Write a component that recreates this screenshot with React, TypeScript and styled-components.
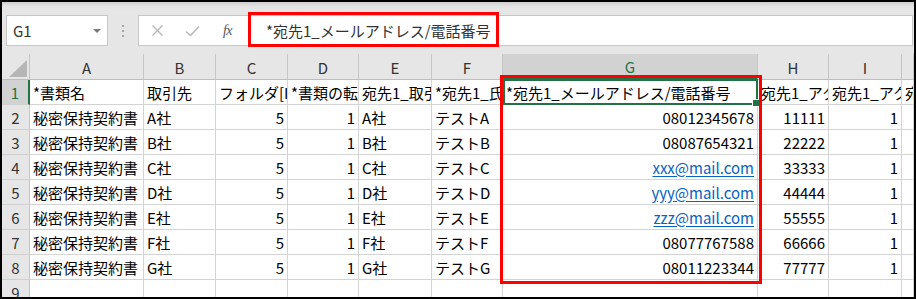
import React from 'react'
import styled, { createGlobalStyle } from 'styled-components'

const GlobalStyle = createGlobalStyle`
  html, body {
    margin: 0;
    padding: 0;
    background: #ffffff;
  }
`

const Frame = styled.div`
  position: relative;
  width: 916px;
  height: 299px;
  box-sizing: border-box;
  border: 2px solid #000;
  overflow: hidden;
  background: #e6e6e6;
  display: flex;
  flex-direction: column;
  font-family: 'Noto Sans CJK JP', 'Noto Sans', sans-serif;
`

const FormulaBar = styled.div`
  display: flex;
  align-items: flex-start;
  height: 52px;
  flex-shrink: 0;
  box-sizing: border-box;
  padding: 13px 1px 0 4px;
  background: linear-gradient(#cdcdcd 0px, #e2e2e2 4px, #e6e6e6 8px);
`

const NameBox = styled.div`
  width: 102px;
  height: 31px;
  box-sizing: border-box;
  border: 1px solid #c6c6c6;
  background: #fff;
  display: flex;
  align-items: center;
  justify-content: space-between;
  padding: 0 6px;
  font-size: 15px;
  color: #333;
`

const DropArrow = styled.span`
  width: 0;
  height: 0;
  border-left: 4px solid transparent;
  border-right: 4px solid transparent;
  border-top: 4px solid #7a7a7a;
`

const Grip = styled.div`
  width: 30px;
  height: 31px;
  display: flex;
  flex-direction: column;
  align-items: center;
  justify-content: center;
  gap: 3px;
`

const GripDot = styled.span`
  width: 2px;
  height: 2px;
  background: #a6a6a6;
`

const FormulaBox = styled.div`
  flex: 1;
  height: 31px;
  box-sizing: border-box;
  border: 1px solid #c6c6c6;
  background: #fff;
  display: flex;
  align-items: center;
  padding-left: 1px;
`

const IconButton = styled.div`
  width: 35px;
  height: 29px;
  display: flex;
  align-items: center;
  justify-content: center;
`

const FxLabel = styled.span`
  font-family: 'Liberation Serif', serif;
  font-style: italic;
  font-size: 14px;
  color: #555;
  letter-spacing: -0.5px;
`

const FormulaText = styled.span`
  padding-left: 21px;
  font-size: 15px;
  color: #333;
  white-space: nowrap;
`

const Sheet = styled.div`
  flex: 1;
  display: grid;
  grid-template-columns: 28px 114px 72px 72px 71px 73px 71px 255px 71px 73px 1fr;
  grid-template-rows: 26px;
  grid-auto-rows: 25px;
  background: #fff;
  font-size: 15px;
  color: #000;
`

const Corner = styled.div`
  background: #e6e6e6;
  border-right: 1px solid #c6c6c6;
  border-bottom: 1px solid #bdbdbd;
  display: flex;
  align-items: flex-end;
  justify-content: flex-end;
  padding: 0 2px 2px 0;
`

const ColHead = styled.div<{ $active?: boolean }>`
  background: ${(p) => (p.$active ? '#d2d2d2' : '#e6e6e6')};
  color: ${(p) => (p.$active ? '#217346' : '#333')};
  border-right: 1px solid #c6c6c6;
  border-bottom: ${(p) => (p.$active ? '2px solid #217346' : '1px solid #bdbdbd')};
  display: flex;
  align-items: center;
  justify-content: center;
  padding-top: 1px;
  box-sizing: border-box;
`

const RowHead = styled.div<{ $active?: boolean }>`
  background: ${(p) => (p.$active ? '#d2d2d2' : '#e6e6e6')};
  color: ${(p) => (p.$active ? '#217346' : '#333')};
  border-right: ${(p) => (p.$active ? '2px solid #217346' : '1px solid #c6c6c6')};
  border-bottom: 1px solid #d0d0d0;
  display: flex;
  align-items: center;
  justify-content: center;
`

const Cell = styled.div<{ $align?: 'left' | 'right' }>`
  border-right: 1px solid #d4d4d4;
  border-bottom: 1px solid #d4d4d4;
  display: flex;
  align-items: center;
  justify-content: ${(p) => (p.$align === 'right' ? 'flex-end' : 'flex-start')};
  padding: 0 3px;
  overflow: hidden;
  white-space: nowrap;
  min-width: 0;
`

const Link = styled.span`
  color: #0563c1;
  text-decoration: underline;
  text-underline-offset: 2px;
`

const Highlight = styled.div<{ $left: number; $top: number; $w: number; $h: number }>`
  position: absolute;
  left: ${(p) => p.$left}px;
  top: ${(p) => p.$top}px;
  width: ${(p) => p.$w}px;
  height: ${(p) => p.$h}px;
  box-sizing: border-box;
  border: 3px solid #ff0000;
  pointer-events: none;
`

const Selection = styled.div`
  position: absolute;
  left: 501px;
  top: 77px;
  width: 255px;
  height: 26px;
  box-sizing: border-box;
  border: 2px solid #217346;
  pointer-events: none;
`

const FillHandle = styled.span`
  position: absolute;
  right: -4px;
  bottom: -4px;
  width: 6px;
  height: 6px;
  background: #217346;
  border: 1px solid #fff;
`

const columns = ['A', 'B', 'C', 'D', 'E', 'F', 'G', 'H', 'I', 'J']

const headerRow = [
  '*書類名',
  '取引先',
  'フォルダ[ID]',
  '*書類の転送設定',
  '宛先1_取引先名',
  '*宛先1_氏名',
  '*宛先1_メールアドレス/電話番号',
  '宛先1_アクセスコード',
  '宛先1_アクセスコード有効期限',
  '宛先2_取引先名',
]

const data = [
  ['A', 'テストA', '08012345678', '11111'],
  ['B', 'テストB', '08087654321', '22222'],
  ['C', 'テストC', 'xxx@mail.com', '33333'],
  ['D', 'テストD', 'yyy@mail.com', '44444'],
  ['E', 'テストE', 'zzz@mail.com', '55555'],
  ['F', 'テストF', '08077767588', '66666'],
  ['G', 'テストG', '08011223344', '77777'],
]

const CrossIcon = () => (
  <svg width="13" height="13" viewBox="0 0 13 13">
    <path d="M1.5 1.5 L11.5 11.5 M11.5 1.5 L1.5 11.5" stroke="#b8b8b8" strokeWidth="1.4" fill="none" />
  </svg>
)

const CheckIcon = () => (
  <svg width="15" height="12" viewBox="0 0 15 12">
    <path d="M1 6.5 L5.5 10.5 L14 1.5" stroke="#b8b8b8" strokeWidth="1.6" fill="none" />
  </svg>
)

const CornerTriangle = () => (
  <svg width="18" height="17" viewBox="0 0 18 17">
    <polygon points="18,0 18,17 0,17" fill="#b6b6b6" />
  </svg>
)

const App = () => {
  return (
    <Frame>
      <GlobalStyle />
      <FormulaBar>
        <NameBox>
          <span>G1</span>
          <DropArrow />
        </NameBox>
        <Grip>
          <GripDot />
          <GripDot />
          <GripDot />
        </Grip>
        <FormulaBox>
          <IconButton>
            <CrossIcon />
          </IconButton>
          <IconButton>
            <CheckIcon />
          </IconButton>
          <IconButton>
            <FxLabel>fx</FxLabel>
          </IconButton>
          <FormulaText>*宛先1_メールアドレス/電話番号</FormulaText>
        </FormulaBox>
      </FormulaBar>

      <Sheet>
        <Corner>
          <CornerTriangle />
        </Corner>
        {columns.map((c) => (
          <ColHead key={c} $active={c === 'G'}>
            {c === 'J' ? '' : c}
          </ColHead>
        ))}

        <RowHead $active>1</RowHead>
        {headerRow.map((t, i) => (
          <Cell key={i}>{t}</Cell>
        ))}

        {data.map(([co, test, contact, code], r) => (
          <React.Fragment key={co}>
            <RowHead>{r + 2}</RowHead>
            <Cell>秘密保持契約書</Cell>
            <Cell>{co}社</Cell>
            <Cell $align="right">5</Cell>
            <Cell $align="right">1</Cell>
            <Cell>{co}社</Cell>
            <Cell>{test}</Cell>
            <Cell $align="right">
              {contact.includes('@') ? <Link>{contact}</Link> : contact}
            </Cell>
            <Cell $align="right">{code}</Cell>
            <Cell $align="right">1</Cell>
            <Cell />
          </React.Fragment>
        ))}

        <RowHead>9</RowHead>
        {columns.map((c) => (
          <Cell key={c} />
        ))}
      </Sheet>

      <Selection>
        <FillHandle />
      </Selection>
      <Highlight $left={246} $top={10} $w={251} $h={35} />
      <Highlight $left={498} $top={73} $w={262} $h={209} />
    </Frame>
  )
}

export default App
